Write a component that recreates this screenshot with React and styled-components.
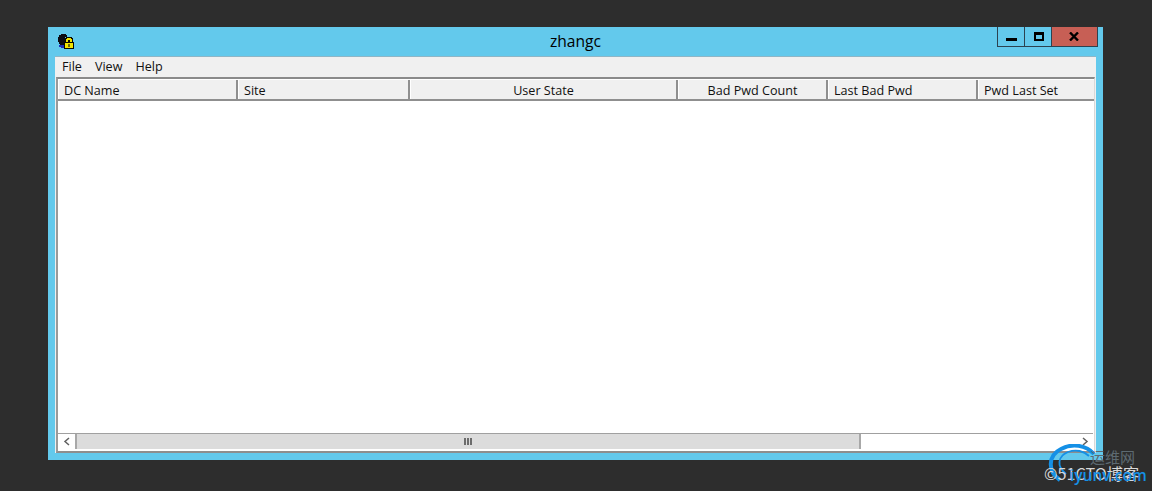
import React from "react";
import styled, { createGlobalStyle } from "styled-components";

const GlobalStyle = createGlobalStyle`
  html, body {
    margin: 0;
    padding: 0;
    background: #2d2d2d;
  }
  body {
    font-family: "Open Sans", "Noto Sans", "Liberation Sans", sans-serif;
    overflow: hidden;
  }
`;

const Page = styled.div`
  position: relative;
  width: 1152px;
  height: 491px;
  padding: 27px 49px 31px 48px;
  box-sizing: border-box;
`;

const Window = styled.div`
  position: relative;
  height: 433px;
  background: #63c9ec;
  padding: 0 7px 7px 7px;
  box-sizing: border-box;
  display: flex;
  flex-direction: column;
`;

const TitleBar = styled.div`
  height: 30px;
  flex: none;
  display: flex;
  align-items: center;
  justify-content: center;
  padding-bottom: 3px;
  font-size: 15.6px;
  color: #000;
  box-sizing: border-box;
`;

const AppIcon = styled.svg`
  position: absolute;
  left: 10px;
  top: 7px;
  width: 16px;
  height: 15px;
`;

const WindowControls = styled.div`
  position: absolute;
  top: 0;
  right: 5px;
  display: flex;
  height: 20px;
`;

const ControlButton = styled.div`
  width: ${(p) => p.$width}px;
  height: 20px;
  box-sizing: border-box;
  background: ${(p) => (p.$close ? "#c75f55" : "#63c9ec")};
  border: 1px solid #2c4250;
  border-top: none;
  border-left-width: ${(p) => (p.$first ? 1 : 0)}px;
  display: flex;
  align-items: center;
  justify-content: center;
`;

const Client = styled.div`
  flex: 1;
  background: #f0f0f0;
  display: flex;
  flex-direction: column;
  box-shadow: 0 -1px 0 #8fb6c6;
  min-height: 0;
`;

const MenuBar = styled.div`
  height: 20px;
  flex: none;
  display: flex;
  align-items: center;
  gap: 13px;
  padding: 0 0 1px 7px;
  box-sizing: border-box;
  font-size: 12.6px;
  color: #111;
`;

const ListFrame = styled.div`
  flex: 1;
  min-height: 0;
  margin: 0 1px;
  border-top: 2px solid #8a8a8a;
  border-left: 2px solid #9a9a9a;
  border-right: 1px solid #d8d8d8;
  border-bottom: 2px solid #8e8e8e;
  background: #fff;
  display: flex;
  flex-direction: column;
`;

const HeaderRow = styled.div`
  height: 22px;
  flex: none;
  display: flex;
  background: #f0f0f0;
  border-top: 1px solid #fff;
  border-bottom: 2px solid #8f8f8f;
  box-sizing: border-box;
`;

const HeaderCell = styled.div`
  width: ${(p) => p.$width}px;
  flex: none;
  box-sizing: border-box;
  padding: 0 5px;
  border-left: 1px solid #fff;
  border-right: 2px solid #8f8f8f;
  font-size: 12.6px;
  line-height: 21px;
  color: #111;
  text-align: ${(p) => (p.$center ? "center" : "left")};
  white-space: nowrap;
  overflow: hidden;

  &:last-child {
    border-right: none;
  }
`;

const ListBody = styled.div`
  flex: 1;
  background: #fff;
`;

const ScrollBar = styled.div`
  height: 17px;
  flex: none;
  display: flex;
  background: #fff;
  border-top: 1px solid #a0a0a0;
  box-sizing: border-box;
  padding-bottom: 1px;
  margin: 0 1px 1px 0;
`;

const ScrollArrow = styled.div`
  width: 17px;
  flex: none;
  display: flex;
  align-items: center;
  justify-content: center;
  background: #fff;
`;

const ScrollThumb = styled.div`
  width: 786px;
  flex: none;
  background: #dcdcdc;
  border-left: 2px solid #a8a8a8;
  border-right: 2px solid #a8a8a8;
  box-sizing: border-box;
  display: flex;
  align-items: center;
  justify-content: center;
  gap: 1px;
`;

const Grip = styled.span`
  width: 2px;
  height: 7px;
  background: #6c6c6c;
`;

const ScrollTrack = styled.div`
  flex: 1;
`;

const Watermark = styled.div`
  position: absolute;
  left: 1044px;
  top: 444px;
  width: 108px;
  height: 47px;
`;

const WatermarkArc = styled.svg`
  position: absolute;
  left: 4px;
  top: 0;
  width: 54px;
  height: 40px;
`;

const CnMark = styled.span`
  position: absolute;
  left: 46px;
  top: 3px;
  font-family: "Noto Sans CJK SC", sans-serif;
  font-size: 15px;
  line-height: 20px;
  color: #5d6a72;
  white-space: nowrap;
`;

const BlogMark = styled.span`
  position: absolute;
  left: 0;
  top: 18px;
  font-family: "Noto Sans CJK SC", "Open Sans", sans-serif;
  font-size: 16.2px;
  line-height: 22px;
  color: #d8d8d8;
  white-space: nowrap;
`;

const SiteMark = styled.span`
  position: absolute;
  left: 26px;
  top: 20px;
  font-family: "Open Sans", sans-serif;
  font-size: 15.5px;
  line-height: 22px;
  font-weight: 600;
  color: #1590e6;
  white-space: nowrap;
`;

const columns = [
  { label: "DC Name", width: 180 },
  { label: "Site", width: 172 },
  { label: "User State", width: 268, center: true },
  { label: "Bad Pwd Count", width: 150, center: true },
  { label: "Last Bad Pwd", width: 150 },
  { label: "Pwd Last Set", width: 117 },
];

function LockIcon() {
  return (
    <AppIcon viewBox="0 0 16 15" shapeRendering="crispEdges">
      <path d="M3 0h5v1h1v2H7v7H6v1H2v-1H1V8H0V3h1V1h2z" fill="#0c0c14" />
      <path d="M1 11h5v3H3v-1H1z" fill="#1d2fb8" />
      <path d="M8 3h6v1h1v4h1v7H6V8h1V4h1z" fill="#0b0b00" />
      <path d="M9 4h4v1h1v3h-2V6h-2v2H8V5h1z" fill="#f2e400" />
      <path d="M7 9h8v5H7z" fill="#f2e400" />
      <path d="M10 10h2v3h-2z" fill="#6d6a10" />
    </AppIcon>
  );
}

function MinimizeGlyph() {
  return (
    <svg width="11" height="3" viewBox="0 0 11 3" style={{ marginTop: 5 }} shapeRendering="crispEdges">
      <path d="M0 0h11v3H0z" fill="#000" />
    </svg>
  );
}

function MaximizeGlyph() {
  return (
    <svg width="10" height="9" viewBox="0 0 10 9" style={{ marginLeft: 2 }} shapeRendering="crispEdges">
      <path d="M0 0h10v9H0zM2 3v4h6V3z" fillRule="evenodd" fill="#000" />
    </svg>
  );
}

function CloseGlyph() {
  return (
    <svg width="10" height="9" viewBox="0 0 10 9" style={{ marginRight: 2 }}>
      <path d="M1 0.5L9 8.5M9 0.5L1 8.5" stroke="#000" strokeWidth="2.4" fill="none" />
    </svg>
  );
}

export default function App() {
  return (
    <>
      <GlobalStyle />
      <Page>
        <Window>
          <LockIcon />
          <TitleBar>zhangc</TitleBar>
          <WindowControls>
            <ControlButton $width={28} $first>
              <MinimizeGlyph />
            </ControlButton>
            <ControlButton $width={27}>
              <MaximizeGlyph />
            </ControlButton>
            <ControlButton $width={46} $close>
              <CloseGlyph />
            </ControlButton>
          </WindowControls>
          <Client>
            <MenuBar>
              <span>File</span>
              <span>View</span>
              <span>Help</span>
            </MenuBar>
            <ListFrame>
              <HeaderRow>
                {columns.map((col) => (
                  <HeaderCell key={col.label} $width={col.width} $center={col.center}>
                    {col.label}
                  </HeaderCell>
                ))}
              </HeaderRow>
              <ListBody />
              <ScrollBar>
                <ScrollArrow>
                  <svg width="8" height="9" viewBox="0 0 8 9">
                    <path d="M6 1L2 4.5L6 8" fill="none" stroke="#606060" strokeWidth="1.5" />
                  </svg>
                </ScrollArrow>
                <ScrollThumb>
                  <Grip />
                  <Grip />
                  <Grip />
                </ScrollThumb>
                <ScrollTrack />
                <ScrollArrow>
                  <svg width="8" height="9" viewBox="0 0 8 9">
                    <path d="M2 1L6 4.5L2 8" fill="none" stroke="#606060" strokeWidth="1.5" />
                  </svg>
                </ScrollArrow>
              </ScrollBar>
            </ListFrame>
          </Client>
        </Window>
        <Watermark>
          <WatermarkArc viewBox="0 0 54 40">
            <path d="M12 36C0 28 -1 12 13 5C24 -1 38 1 46 10" fill="none" stroke="#1590e6" strokeWidth="4" />
            <path d="M18 30C8 22 10 12 20 8C28 5 36 7 41 12" fill="none" stroke="#1590e6" strokeWidth="1.8" />
          </WatermarkArc>
          <CnMark>运维网</CnMark>
          <BlogMark>©51CTO博客</BlogMark>
          <SiteMark>iyunv.com</SiteMark>
        </Watermark>
      </Page>
    </>
  );
}
